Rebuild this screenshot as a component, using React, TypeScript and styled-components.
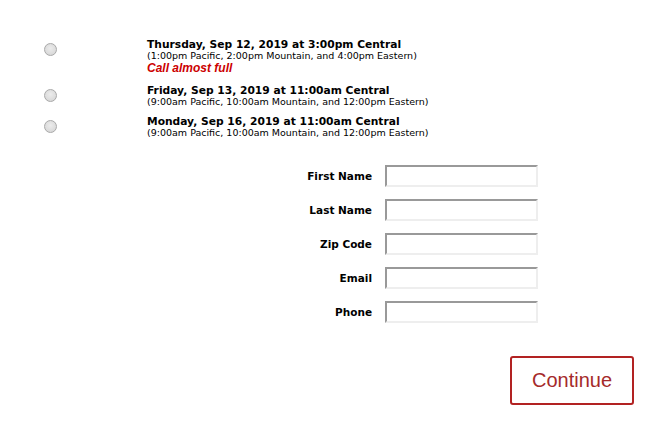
import { Fragment } from 'react';
import styled, { createGlobalStyle } from 'styled-components';

const GlobalStyle = createGlobalStyle`
  html, body {
    margin: 0;
    padding: 0;
    background: #fff;
  }
`;

const Page = styled.div`
  width: 657px;
  height: 423px;
  box-sizing: border-box;
  padding: 39px 23px 0 44px;
  font-family: "DejaVu Sans", Verdana, sans-serif;
  color: #000;
  display: flex;
  flex-direction: column;
`;

const SessionList = styled.div`
  display: flex;
  flex-direction: column;
  gap: 9px;
`;

const SessionRow = styled.label`
  display: grid;
  grid-template-columns: 103px 1fr;
  align-items: start;
`;

const Radio = styled.input.attrs({ type: 'radio', name: 'session' })`
  appearance: none;
  box-sizing: border-box;
  margin: 4px 0 0 0;
  width: 13px;
  height: 13px;
  border-radius: 50%;
  border: 1px solid #a9a9a9;
  background: radial-gradient(circle at 50% 40%, #ececec 0%, #dadada 70%, #d0d0d0 100%);
`;

const SessionText = styled.div`
  display: flex;
  flex-direction: column;
`;

const Title = styled.div`
  font-size: 10.7px;
  font-weight: bold;
  line-height: 12px;
`;

const Sub = styled.div`
  font-size: 9.5px;
  line-height: 10px;
`;

const Warning = styled.div`
  font-family: "Liberation Sans", Arial, sans-serif;
  font-size: 12px;
  font-weight: bold;
  font-style: italic;
  color: #cc0000;
  line-height: 15px;
`;

const Form = styled.div`
  margin-top: 27px;
  align-self: flex-start;
  margin-left: 208px;
  display: grid;
  grid-template-columns: 120px 153px;
  column-gap: 13px;
  row-gap: 12px;
  align-items: center;
`;

const Label = styled.div`
  text-align: right;
  font-family: Tahoma, "DejaVu Sans", sans-serif;
  font-size: 10.5px;
  font-weight: bold;
`;

const Field = styled.input`
  box-sizing: border-box;
  width: 153px;
  height: 22px;
  margin: 0;
  border-style: solid;
  border-width: 2px;
  border-color: #999 #eee #eee #999;
  background: #fff;
`;

const Actions = styled.div`
  display: flex;
  justify-content: flex-end;
  margin-top: 33px;
`;

const ContinueButton = styled.button`
  width: 124px;
  height: 49px;
  box-sizing: border-box;
  border: 2px solid #b22222;
  border-radius: 3px;
  background: #fff;
  color: #a52a2a;
  font-family: "Liberation Sans", Arial, sans-serif;
  font-size: 20px;
  cursor: pointer;
`;

const sessions = [
  {
    title: 'Thursday, Sep 12, 2019 at 3:00pm Central',
    sub: '(1:00pm Pacific, 2:00pm Mountain, and 4:00pm Eastern)',
    warning: 'Call almost full',
  },
  {
    title: 'Friday, Sep 13, 2019 at 11:00am Central',
    sub: '(9:00am Pacific, 10:00am Mountain, and 12:00pm Eastern)',
  },
  {
    title: 'Monday, Sep 16, 2019 at 11:00am Central',
    sub: '(9:00am Pacific, 10:00am Mountain, and 12:00pm Eastern)',
  },
];

const fields = ['First Name', 'Last Name', 'Zip Code', 'Email', 'Phone'];

export default function App() {
  return (
    <Page>
      <GlobalStyle />
      <SessionList>
        {sessions.map(s => (
          <SessionRow key={s.title}>
            <Radio />
            <SessionText>
              <Title>{s.title}</Title>
              <Sub>{s.sub}</Sub>
              {s.warning && <Warning>{s.warning}</Warning>}
            </SessionText>
          </SessionRow>
        ))}
      </SessionList>
      <Form>
        {fields.map(f => (
          <Fragment key={f}>
            <Label>{f}</Label>
            <Field type="text" />
          </Fragment>
        ))}
      </Form>
      <Actions>
        <ContinueButton>Continue</ContinueButton>
      </Actions>
    </Page>
  );
}
